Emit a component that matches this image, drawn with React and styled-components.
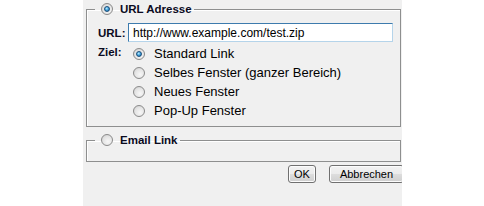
import React from 'react';
import styled, { createGlobalStyle } from 'styled-components';

const GlobalStyle = createGlobalStyle`
  html, body {
    margin: 0;
    padding: 0;
    background: #ffffff;
  }
`;

const Panel = styled.div`
  width: 319px;
  height: 206px;
  margin-left: 83px;
  background: #f0f0f0;
  overflow: hidden;
  font-family: "Liberation Sans", Arial, sans-serif;
  color: #000;
`;

const GroupBox = styled.fieldset`
  box-sizing: border-box;
  width: 315px;
  margin: ${(p) => p.$top}px 0 0 3px;
  padding: 0 0 ${(p) => p.$bottom}px 0;
  border: 1px solid #8e8f8f;
  box-shadow: inset 1px 1px 0 #ffffff;
  min-width: 0;
`;

const Legend = styled.legend`
  display: flex;
  align-items: center;
  height: 14px;
  margin-left: 8px;
  padding: 0 2px 0 6px;
  gap: 7px;
  font-size: 11.5px;
  font-weight: bold;
  line-height: 14px;
  color: #0a0a1e;
`;

const Radio = styled.span`
  box-sizing: border-box;
  flex: none;
  position: relative;
  width: 12px;
  height: 12px;
  border-radius: 50%;
  border: 1px solid #8a8a8a;
  background: radial-gradient(circle at 60% 65%, #f7f7f7 0%, #e4e4e4 55%, #c9c9c9 100%);
  &::after {
    content: '';
    display: ${(p) => (p.$checked ? 'block' : 'none')};
    position: absolute;
    left: 2px;
    top: 2px;
    width: 6px;
    height: 6px;
    border-radius: 50%;
    box-sizing: border-box;
    border: 1px solid #1b4d7a;
    background: radial-gradient(circle at 40% 35%, #b9eaff 0%, #3fa3dc 50%, #1d5f98 100%);
  }
`;

const Body = styled.div`
  padding-left: 11px;
`;

const UrlRow = styled.div`
  display: flex;
  align-items: center;
  margin-top: 7px;
  height: 19px;
`;

const Label = styled.span`
  width: ${(p) => p.$width}px;
  flex: none;
  font-size: 11.5px;
  font-weight: bold;
  color: #0a0a1e;
`;

const UrlInput = styled.input`
  box-sizing: border-box;
  width: 265px;
  height: 19px;
  margin: 0;
  padding: 0 0 0 4px;
  border: 1px solid #3d7bad;
  border-right-color: #b5d4ea;
  border-bottom-color: #b5d4ea;
  outline: none;
  font-family: "Liberation Sans", Arial, sans-serif;
  font-size: 12px;
  color: #000;
  background: #fff;
`;

const TargetRow = styled.div`
  display: flex;
  margin-top: 2px;
`;

const TargetLabel = styled(Label)`
  line-height: 19px;
  margin-top: -1px;
`;

const Options = styled.div`
  display: flex;
  flex-direction: column;
`;

const Option = styled.label`
  display: flex;
  align-items: center;
  gap: 9px;
  height: 19px;
  font-size: 13px;
`;

const ButtonRow = styled.div`
  display: flex;
  justify-content: flex-end;
  gap: 13px;
  margin: 3px -2px 0 0;
`;

const Button = styled.button`
  box-sizing: border-box;
  flex: none;
  width: ${(p) => p.$width}px;
  height: 18px;
  margin: 0;
  padding: 0;
  border: 1px solid #707070;
  border-radius: 3px;
  background: linear-gradient(#f2f2f2 0%, #ebebeb 50%, #dddddd 51%, #cfcfcf 100%);
  box-shadow: inset 0 0 0 1px #fcfcfc;
  font-family: "Liberation Sans", Arial, sans-serif;
  font-size: 11px;
  color: #000;
`;

const targets = [
  'Standard Link',
  'Selbes Fenster (ganzer Bereich)',
  'Neues Fenster',
  'Pop-Up Fenster',
];

export default function App() {
  return (
    <>
      <GlobalStyle />
      <Panel>
        <GroupBox $top={2} $bottom={6}>
          <Legend>
            <Radio $checked />
            URL Adresse
          </Legend>
          <Body>
            <UrlRow>
              <Label $width={30}>URL:</Label>
              <UrlInput defaultValue="http://www.example.com/test.zip" />
            </UrlRow>
            <TargetRow>
              <TargetLabel $width={35}>Ziel:</TargetLabel>
              <Options>
                {targets.map((t, idx) => (
                  <Option key={t}>
                    <Radio $checked={idx === 0} />
                    {t}
                  </Option>
                ))}
              </Options>
            </TargetRow>
          </Body>
        </GroupBox>
        <GroupBox $top={6} $bottom={14}>
          <Legend>
            <Radio />
            Email Link
          </Legend>
        </GroupBox>
        <ButtonRow>
          <Button $width={28}>OK</Button>
          <Button $width={75}>Abbrechen</Button>
        </ButtonRow>
      </Panel>
    </>
  );
}
